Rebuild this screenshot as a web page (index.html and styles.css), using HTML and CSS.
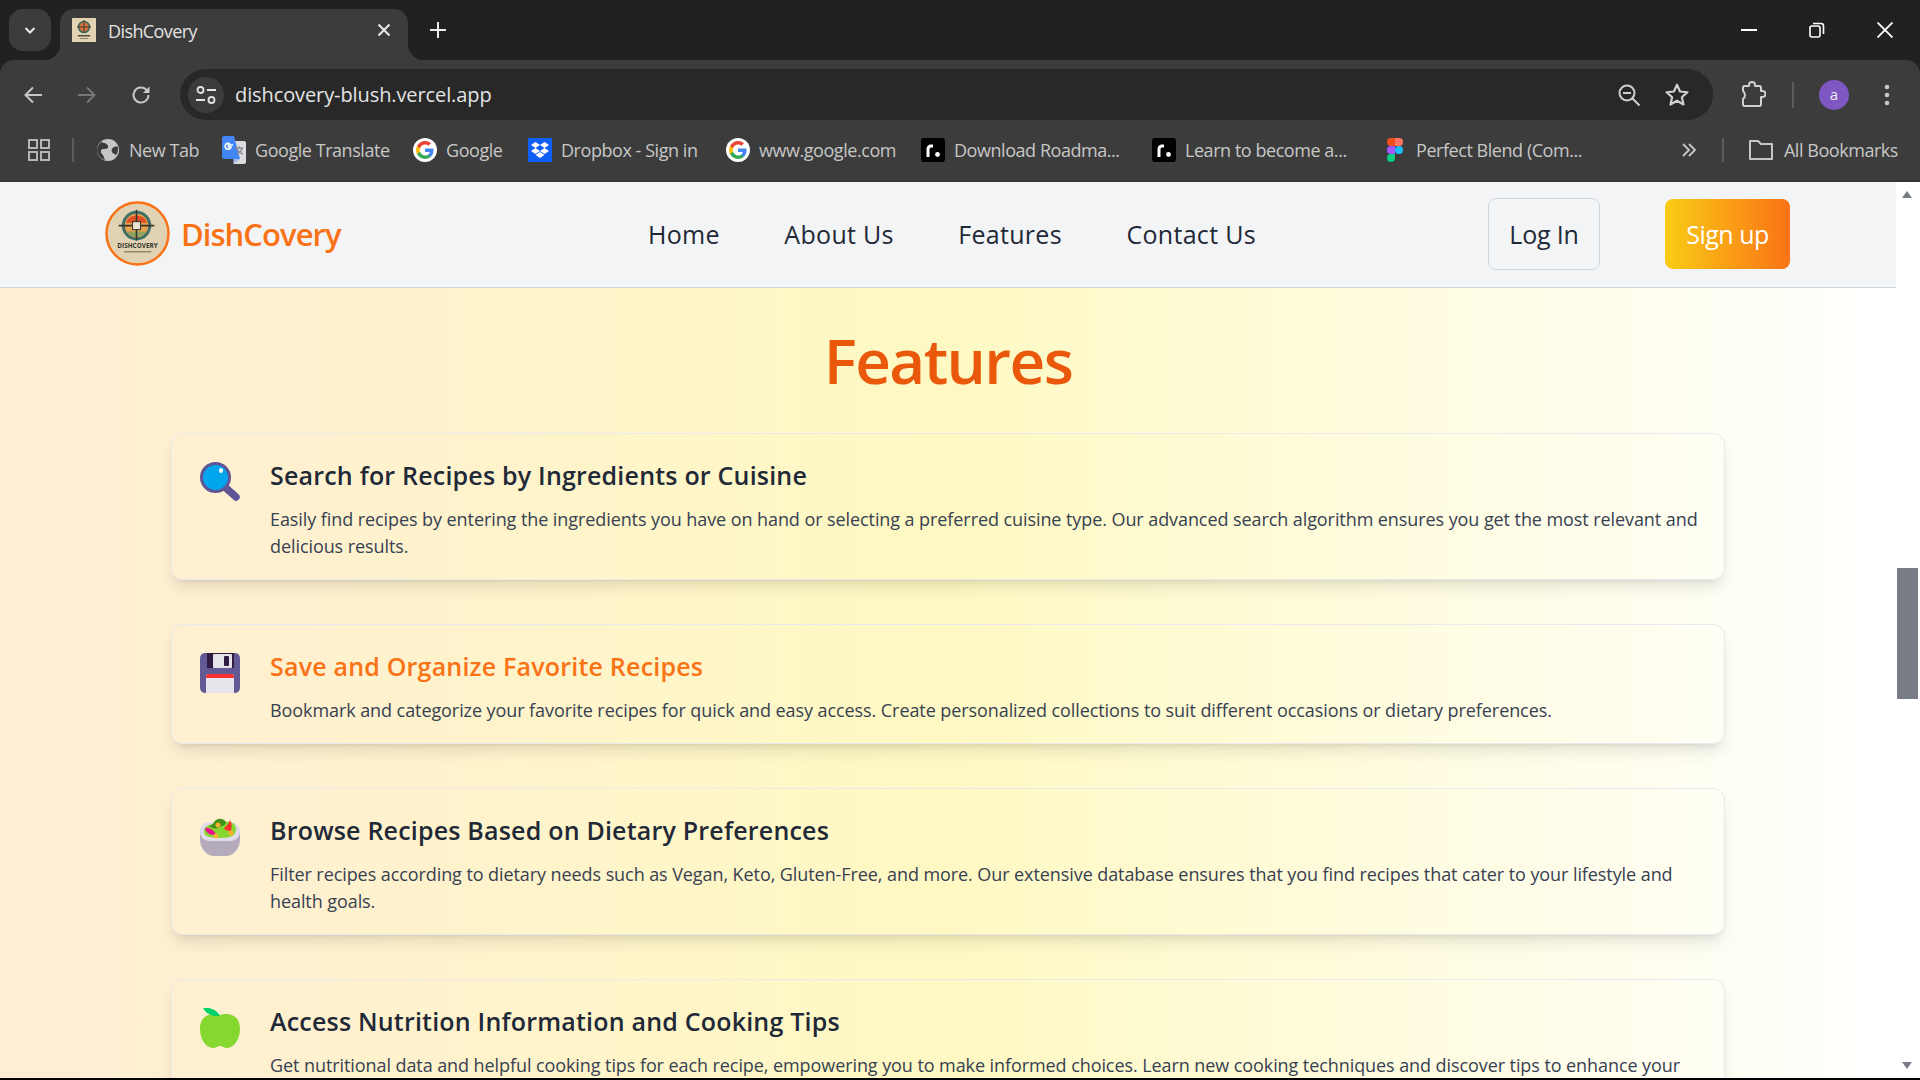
FILE: index.html
```html
<!DOCTYPE html>
<html lang="en">
<head>
    <meta charset="UTF-8">
    <title>DishCovery</title>
    <link rel="stylesheet" href="styles.css">
</head>
<body>
    <header class="browser">
        <div class="tabstrip">
            <button class="tab-search">
                <svg width="18" height="18" viewBox="0 0 18 18"><path d="M4.500 7 9 11.500 13.500 7" fill="none" stroke="#e8eaed" stroke-width="2"/></svg>
            </button>
            <div class="tab">
                <svg class="favicon" width="24" height="24" viewBox="0 0 24 24">
                    <rect width="24" height="24" fill="#e3d3b3"/>
                    <circle cx="12" cy="9" r="5.500" fill="#d9743a" stroke="#3c6b5f" stroke-width="1.600"/>
                    <path d="M12 2v13M5 9h14" stroke="#3a3a32" stroke-width="1"/>
                    <rect x="6" y="17" width="12" height="1.500" fill="#4b4a3d"/>
                    <rect x="8" y="20" width="8" height="1" fill="#8a8268"/>
                </svg>
                <span class="tab-title">DishCovery</span>
                <svg class="tab-close" width="14" height="14" viewBox="0 0 14 14"><path d="M1.500 1.500l11 11M12.500 1.500l-11 11" stroke="#e8eaed" stroke-width="2"/></svg>
            </div>
            <svg class="new-tab" width="16" height="16" viewBox="0 0 16 16"><path d="M8 0v16M0 8h16" stroke="#e8eaed" stroke-width="2"/></svg>
            <div class="window-btns">
                <svg width="16" height="16" viewBox="0 0 16 16"><path d="M0 8h16" stroke="#fff" stroke-width="2"/></svg>
                <svg width="16" height="16" viewBox="0 0 16 16"><rect x="1" y="4" width="10" height="11" rx="2" fill="none" stroke="#fff" stroke-width="1.600"/><path d="M4 1.500h8a2.500 2.500 0 0 1 2.500 2.500v8" fill="none" stroke="#fff" stroke-width="1.600"/></svg>
                <svg width="16" height="16" viewBox="0 0 16 16"><path d="M.5.5l15 15M15.500.5l-15 15" stroke="#fff" stroke-width="1.800"/></svg>
            </div>
        </div>

        <div class="toolbar">
            <svg class="tool back" width="24" height="24" viewBox="0 0 24 24"><path d="M21 12H5M12 4.500 4.500 12l7.500 7.500" fill="none" stroke="#c7c7c7" stroke-width="2"/></svg>
            <svg class="tool forward" width="24" height="24" viewBox="0 0 24 24"><path d="M3 12h16M12 4.500l7.500 7.500-7.500 7.500" fill="none" stroke="#777" stroke-width="2"/></svg>
            <svg class="tool reload" width="24" height="24" viewBox="0 0 24 24"><path d="M19.500 12a7.500 7.500 0 1 1-2.400-5.500L19.500 9" fill="none" stroke="#c7c7c7" stroke-width="2"/><path d="M20.500 3.500V10H14z" fill="#c7c7c7"/></svg>
            <div class="omnibox">
                <span class="site-chip">
                    <svg width="22" height="22" viewBox="0 0 22 22"><circle cx="5.500" cy="6" r="3" fill="none" stroke="#e3e3e3" stroke-width="1.800"/><path d="M12 6h9M1 16h9" stroke="#e3e3e3" stroke-width="1.800"/><circle cx="16.500" cy="16" r="3" fill="none" stroke="#e3e3e3" stroke-width="1.800"/></svg>
                </span>
                <span class="url">dishcovery-blush.vercel.app</span>
                <svg class="omni-zoom" width="24" height="24" viewBox="0 0 24 24"><circle cx="10" cy="10" r="7.500" fill="none" stroke="#d0d0d0" stroke-width="2"/><path d="M6 10h8M15.500 15.500l7 7" stroke="#d0d0d0" stroke-width="2"/></svg>
                <svg class="omni-star" width="26" height="26" viewBox="0 0 24 24"><path d="M12 2.500l2.800 6.300 6.800.7-5.100 4.600 1.500 6.700L12 17.300l-6 3.500 1.500-6.700-5.100-4.600 6.800-.7z" fill="none" stroke="#d0d0d0" stroke-width="2" stroke-linejoin="round"/></svg>
            </div>
            <svg class="tool ext" width="26" height="26" viewBox="0 0 26 26"><path d="M3 6.500a1.500 1.500 0 0 1 1.500-1.500H9V4a3 3 0 0 1 6 0v1h4.500A1.500 1.500 0 0 1 21 6.500V10h1.500a3 3 0 0 1 0 6H21v7.500a1.500 1.500 0 0 1-1.500 1.500h-15A1.500 1.500 0 0 1 3 23.500V18a5 5 0 0 0 0-8z" fill="none" stroke="#d0d0d0" stroke-width="2" stroke-linejoin="round"/></svg>
            <span class="tool-sep"></span>
            <span class="avatar">a</span>
            <svg class="tool dots" width="6" height="24" viewBox="0 0 6 24"><circle cx="3" cy="4" r="2.300" fill="#c7c7c7"/><circle cx="3" cy="12" r="2.300" fill="#c7c7c7"/><circle cx="3" cy="20" r="2.300" fill="#c7c7c7"/></svg>
        </div>

        <nav class="bookmarks">
            <svg class="apps" width="22" height="22" viewBox="0 0 22 22"><g fill="none" stroke="#b5b5b5" stroke-width="2"><rect x="1" y="1" width="8" height="8"/><rect x="13" y="1" width="8" height="8"/><rect x="1" y="13" width="8" height="8"/><rect x="13" y="13" width="8" height="8"/></g></svg>
            <span class="bm-sep"></span>
            <a class="bm bm-newtab">
                <svg width="24" height="24" viewBox="0 0 24 24"><circle cx="12" cy="12" r="11" fill="#c4c7c5"/><path d="M5 4c3 1 6 1 7 4s-3 3-5 3-3 3-1 5 2 4 3 6C5 21 1 17 1 12c0-3 2-6 4-8zM22 9c-3-1-5 0-6 2s0 4 2 5l2 1c2-2 2-5 2-8z" fill="#3c3c3c"/></svg>
                New Tab
            </a>
            <a class="bm bm-translate">
                <svg width="24" height="28" viewBox="0 0 24 28"><path d="M10 5h12a2 2 0 0 1 2 2v19a2 2 0 0 1-2 2H12z" fill="#dadce0"/><path d="M2 0h10l6 23H2a2 2 0 0 1-2-2V2a2 2 0 0 1 2-2z" fill="#4285f4"/><path d="M12 23l-1 5 7-5z" fill="#9fb9ee"/><path d="M13 12h8M17 12v-1.500M15 18c3-1 5-4 5-6M15 13c1 2 3 4 6 5" fill="none" stroke="#8a8d91" stroke-width="1.400"/><path d="M11 9H6.500v2H9a3 3 0 1 1-1-3" fill="none" stroke="#fff" stroke-width="1.600"/></svg>
                Google Translate
            </a>
            <a class="bm bm-google">
                <svg class="g" width="24" height="24" viewBox="0 0 48 48"><use href="#g-logo"/></svg>
                Google
            </a>
            <a class="bm bm-dropbox">
                <svg width="24" height="24" viewBox="0 0 24 24"><rect width="24" height="24" fill="#0f5ff5"/><path d="M7.500 4 12 7l-4.500 3L3 7zM16.500 4 21 7l-4.500 3L12 7zM7.500 10 12 13l-4.500 3L3 13zM16.500 10 21 13l-4.500 3L12 13zM7.500 17 12 14l4.500 3-4.500 3z" fill="#fff"/></svg>
                Dropbox - Sign in
            </a>
            <a class="bm bm-www">
                <svg class="g" width="24" height="24" viewBox="0 0 48 48"><use href="#g-logo"/></svg>
                www.google.com
            </a>
            <a class="bm bm-road">
                <svg width="24" height="24" viewBox="0 0 24 24"><rect width="24" height="24" rx="3" fill="#000"/><path d="M7 19v-8a3 3 0 0 1 3-3h2" fill="none" stroke="#fff" stroke-width="3"/><circle cx="16.500" cy="16.500" r="2.400" fill="#fff"/></svg>
                Download Roadma...
            </a>
            <a class="bm bm-learn">
                <svg width="24" height="24" viewBox="0 0 24 24"><rect width="24" height="24" rx="3" fill="#000"/><path d="M7 19v-8a3 3 0 0 1 3-3h2" fill="none" stroke="#fff" stroke-width="3"/><circle cx="16.500" cy="16.500" r="2.400" fill="#fff"/></svg>
                Learn to become a...
            </a>
            <a class="bm bm-figma">
                <svg width="16" height="24" viewBox="0 0 16 24"><path d="M8 0H4a4 4 0 0 0 0 8h4z" fill="#f24e1e"/><path d="M8 0h4a4 4 0 0 1 0 8H8z" fill="#ff7262"/><path d="M8 8H4a4 4 0 0 0 0 8h4z" fill="#a259ff"/><circle cx="12" cy="12" r="4" fill="#1abcfe"/><path d="M8 16H4a4 4 0 1 0 4 4z" fill="#0acf83"/></svg>
                Perfect Blend (Com...
            </a>
            <svg class="more" width="16" height="16" viewBox="0 0 16 16"><path d="M2 2l6 6-6 6M8 2l6 6-6 6" fill="none" stroke="#c7c7c7" stroke-width="1.800"/></svg>
            <span class="bm-sep bm-sep2"></span>
            <a class="bm bm-all">
                <svg width="24" height="22" viewBox="0 0 24 22"><path d="M1 20V2h8l3 3h11v15z" fill="none" stroke="#c7c7c7" stroke-width="2" stroke-linejoin="round"/></svg>
                All Bookmarks
            </a>
        </nav>
    </header>

    <!-- shared google G -->
    <svg class="defs" width="0" height="0">
        <defs>
            <g id="g-logo">
                <circle cx="24" cy="24" r="24" fill="#fff"/>
                <path d="M41 24.500c0-1.300-.1-2.500-.3-3.500H24v7h9.600c-.4 2.200-1.700 4.100-3.500 5.300v4.400h5.700c3.300-3.100 5.200-7.600 5.200-13.200z" fill="#4285f4"/>
                <path d="M24 42c4.700 0 8.700-1.600 11.800-4.300l-5.700-4.400c-1.600 1.100-3.600 1.700-6.100 1.700-4.600 0-8.500-3.100-9.900-7.300H8.200v4.500C11.100 37.900 17.100 42 24 42z" fill="#34a853"/>
                <path d="M14.100 27.700c-.4-1.100-.6-2.400-.6-3.700s.2-2.600.6-3.700v-4.500H8.200A18 18 0 0 0 6 24c0 2.900.7 5.700 2.200 8.200z" fill="#fbbc05"/>
                <path d="M24 13c2.600 0 5 .9 6.800 2.700l5.100-5.100C32.700 7.700 28.700 6 24 6 17.100 6 11.100 10.100 8.200 15.800l5.900 4.500c1.400-4.200 5.300-7.300 9.900-7.300z" fill="#ea4335"/>
            </g>
        </defs>
    </svg>

    <div class="viewport">
        <div class="page">
            <div class="navbar">
                <a class="brand">
                    <svg class="logo" width="65" height="65" viewBox="0 0 66 66">
                        <circle cx="33" cy="33" r="31.500" fill="#e1d2b4" stroke="#f97316" stroke-width="2.500"/>
                        <circle cx="32" cy="25" r="15" fill="#3f6f66"/>
                        <circle cx="32" cy="25" r="12" fill="#e9a04c"/>
                        <path d="M21 22a12 12 0 0 1 22 0z" fill="#df4f27"/>
                        <path d="M22 31a12 12 0 0 0 20 0z" fill="#8fa25f"/>
                        <path d="M32 9v31M14 25h36" stroke="#33352e" stroke-width="1.600"/>
                        <rect x="28" y="21" width="8" height="8" fill="#ece5cf" stroke="#33352e" stroke-width="1"/>
                        <text class="logo-text" x="33" y="48" text-anchor="middle">DISHCOVERY</text>
                        <rect x="19" y="51" width="28" height="1.200" fill="#7d745c"/>
                    </svg>
                    <span class="brand-name">DishCovery</span>
                </a>
                <div class="nav-links">
                    <a>Home</a>
                    <a>About Us</a>
                    <a>Features</a>
                    <a>Contact Us</a>
                </div>
                <div class="nav-actions">
                    <button class="btn-login">Log In</button>
                    <button class="btn-signup">Sign up</button>
                </div>
            </div>

            <main class="features">
                <h1>Features</h1>

                <section class="card">
                    <svg class="card-icon" width="40" height="40" viewBox="0 0 40 40">
                        <path d="M26 26l10 9" stroke="#5f5596" stroke-width="7.500" stroke-linecap="round"/>
                        <circle cx="15.500" cy="15.500" r="14" fill="#00a6ed" stroke="#5f5596" stroke-width="3"/>
                        <ellipse cx="21" cy="8.500" rx="2" ry="2.500" fill="#fff"/>
                    </svg>
                    <div class="card-body">
                        <h2>Search for Recipes by Ingredients or Cuisine</h2>
                        <p>Easily find recipes by entering the ingredients you have on hand or selecting a preferred cuisine type. Our advanced search algorithm ensures you get the most relevant and delicious results.</p>
                    </div>
                </section>

                <section class="card hovered">
                    <svg class="card-icon" width="40" height="40" viewBox="0 0 40 40">
                        <rect width="40" height="40" rx="5" fill="#635994"/>
                        <path d="M7 0h27v15H7z" fill="#321b41"/>
                        <rect x="13" y="1" width="19" height="14" rx="1" fill="#e6e4ea"/>
                        <rect x="24" y="3" width="5" height="10" rx="1" fill="#321b41"/>
                        <path d="M6 24a3 3 0 0 1 3-3h22a3 3 0 0 1 3 3v16H6z" fill="#e6e4ea"/>
                        <path d="M6 25v-1a3 3 0 0 1 3-3h22a3 3 0 0 1 3 3v1z" fill="#f8312f"/>
                    </svg>
                    <div class="card-body">
                        <h2>Save and Organize Favorite Recipes</h2>
                        <p>Bookmark and categorize your favorite recipes for quick and easy access. Create personalized collections to suit different occasions or dietary preferences.</p>
                    </div>
                </section>

                <section class="card">
                    <svg class="card-icon" width="40" height="40" viewBox="0 0 40 40">
                        <path d="M0 13h40v9c0 10-7 17-14 17H14C7 39 0 32 0 22z" fill="#b4acbc"/>
                        <rect y="5" width="40" height="19" rx="9" fill="#e1dcea"/>
                        <path d="M4 14c0-5 6-6 9-7 2-5 8-6 11-2 4-1 12 0 12 7 0 6-4 9-16 9S4 19 4 14z" fill="#86d72f"/>
                        <path d="M9 9c3-1 4-2 6-5 3-3 8-3 11 1 0 4-5 4-8 6-4 1-6 0-9-2z" fill="#44911b"/>
                        <path d="M5 11c3-1 8 1 11 6-4 2-10 0-11-6z" fill="#f70a8d"/>
                        <path d="M30 3c2 3 2 7 1 11-3 0-7-1-7-3 3-2 5-5 6-8z" fill="#f8312f"/>
                        <circle cx="18" cy="8" r="2.500" fill="#ffb02e"/>
                        <circle cx="16" cy="19" r="2.500" fill="#ffb02e"/>
                        <circle cx="31" cy="16" r="2.500" fill="#ffb02e"/>
                    </svg>
                    <div class="card-body">
                        <h2>Browse Recipes Based on Dietary Preferences</h2>
                        <p>Filter recipes according to dietary needs such as Vegan, Keto, Gluten-Free, and more. Our extensive database ensures that you find recipes that cater to your lifestyle and health goals.</p>
                    </div>
                </section>

                <section class="card">
                    <svg class="card-icon" width="40" height="40" viewBox="0 0 40 40">
                        <path d="M20 7c5-2 20-3 20 14 0 10-6 19-13 19-3 0-5-2-7-2s-4 2-7 2C6 40 0 31 0 21 0 4 15 5 20 7z" fill="#86d72f"/>
                        <path d="M3 0c7-1 14 2 17 8-7 1-14-2-17-8z" fill="#00d26a"/>
                    </svg>
                    <div class="card-body">
                        <h2>Access Nutrition Information and Cooking Tips</h2>
                        <p>Get nutritional data and helpful cooking tips for each recipe, empowering you to make informed choices. Learn new cooking techniques and discover tips to enhance your</p>
                    </div>
                </section>
            </main>
        </div>

        <div class="scrollbar">
            <span class="arrow-up"></span>
            <span class="thumb"></span>
            <span class="arrow-down"></span>
        </div>
    </div>
    <div class="screen-edge"></div>
</body>
</html>
```

FILE: styles.css
```css
* {
    box-sizing: border-box;
}
html, body {
    height: 100%;
}
body {
    margin: 0;
    height: 1080px;
    overflow: hidden;
    display: flex;
    flex-direction: column;
    font-family: "Open Sans", "Noto Sans", sans-serif;
    background: #000;
}
.defs {
    position: absolute;
}

/* browser chrome */
.browser {
    flex: none;
    background: #202221;
    color: #e3e3e3;
}
.tabstrip {
    height: 60px;
    padding: 9px 0 0 9px;
    display: flex;
    align-items: flex-start;
}
.tab-search {
    width: 42px;
    height: 42px;
    border: none;
    border-radius: 14px;
    background: #3c3c3c;
    display: flex;
    align-items: center;
    justify-content: center;
    padding: 0;
}
.tab {
    position: relative;
    width: 348px;
    height: 51px;
    margin-left: 9px;
    padding: 9px 17px 0 12px;
    background: #3c3c3c;
    border-radius: 14px 14px 0 0;
    display: flex;
    align-items: flex-start;
}
.tab::before, .tab::after {
    content: "";
    position: absolute;
    bottom: 0;
    width: 16px;
    height: 16px;
}
.tab::before {
    left: -16px;
    background: radial-gradient(circle at 0 0, transparent 16px, #3c3c3c 16.5px);
}
.tab::after {
    right: -16px;
    background: radial-gradient(circle at 100% 0, transparent 16px, #3c3c3c 16.5px);
}
.tab-title {
    margin: 1px 0 0 12px;
    font-size: 18px;
    line-height: 24px;
    letter-spacing: -.6px;
    flex: 1;
}
.tab-close {
    margin-top: 5px;
}
.new-tab {
    margin: 13px 0 0 22px;
}
.window-btns {
    margin-left: auto;
    margin-right: 27px;
    margin-top: 13px;
    display: flex;
    gap: 52px;
}
.toolbar {
    height: 60px;
    background: #3c3c3c;
    border-radius: 14px 14px 0 0;
    display: flex;
    align-items: flex-start;
    padding-top: 9px;
    position: relative;
}
.tool {
    flex: none;
}
.back {
    margin: 14px 0 0 21px;
}
.forward {
    margin: 14px 0 0 30px;
}
.reload {
    margin: 14px 0 0 30px;
}
.omnibox {
    width: 1533px;
    height: 51px;
    margin-left: 27px;
    background: #282828;
    border-radius: 26px;
    display: flex;
    align-items: center;
    padding-left: 8px;
}
.site-chip {
    width: 36px;
    height: 36px;
    border-radius: 50%;
    background: #3c3c3c;
    display: flex;
    align-items: center;
    justify-content: center;
}
.url {
    margin-left: 11px;
    font-size: 20px;
    letter-spacing: -.1px;
    color: #e3e3e3;
}
.omni-zoom {
    margin-left: auto;
}
.omni-star {
    margin: 0 23px 0 23px;
}
.ext {
    margin: 12px 0 0 27px;
}
.tool-sep {
    width: 2px;
    height: 26px;
    margin: 13px 0 0 26px;
    background: #5c5c5c;
}
.avatar {
    width: 30px;
    height: 30px;
    margin: 11px 0 0 25px;
    border-radius: 50%;
    background: #7e57c2;
    color: #eee;
    font-size: 15px;
    line-height: 29px;
    text-align: center;
}
.dots {
    margin: 14px 0 0 35px;
}
.bookmarks {
    height: 62px;
    background: #3c3c3c;
    border-bottom: 2px solid #35363a;
    display: flex;
    align-items: center;
    padding: 0 0 0 28px;
    font-size: 18px;
    color: #c7c7c7;
}
.apps {
    flex: none;
}
.bm-sep {
    width: 2px;
    height: 24px;
    margin-left: 22px;
    background: #5c5c5c;
    flex: none;
}
.bm {
    flex: none;
    display: flex;
    align-items: center;
    gap: 9px;
    white-space: nowrap;
    letter-spacing: -.45px;
    margin-left: 25px;
}
.bm svg {
    flex: none;
}
.bm-newtab {
    width: 101px;
    margin-left: 22px;
}
.bm-translate {
    width: 166px;
}
.bm-google {
    width: 90px;
}
.bm-dropbox {
    width: 173px;
}
.bm-www {
    width: 170px;
}
.bm-road, .bm-learn {
    width: 206px;
}
.bm-figma svg {
    margin: 0 4px;
}
.more {
    margin-left: auto;
}
.bm-sep2 {
    margin-left: 25px;
}
.bm-all {
    margin: 0 22px 0 25px;
}
.bm-all svg {
    margin-right: 2px;
}

/* page */
.viewport {
    flex: 1;
    min-height: 0;
    display: flex;
}
.page {
    flex: 1;
    min-width: 0;
    overflow: hidden;
    background: linear-gradient(to right, #ffedd5, #fef9c3 50%, #ffffff);
}
.navbar {
    height: 106px;
    background: #f3f4f6;
    border-bottom: 1px solid #d1d5db;
    display: flex;
    align-items: center;
    padding: 0 106px 2px 105px;
}
.brand {
    display: flex;
    align-items: center;
    gap: 11px;
    width: 543px;
}
.logo {
    flex: none;
}
.logo-text {
    font-size: 6.5px;
    font-weight: 700;
    fill: #33352e;
}
.brand-name {
    color: #f97316;
    font-size: 31px;
    font-weight: 600;
    letter-spacing: -.95px;
}
.nav-links {
    display: flex;
    gap: 64.5px;
    font-size: 25px;
    letter-spacing: .3px;
    color: #1f2937;
}
.nav-actions {
    margin-left: auto;
    display: flex;
    align-items: center;
    gap: 65px;
}
.nav-actions button {
    font-family: inherit;
    font-size: 25px;
    padding: 0;
}
.btn-login {
    width: 112px;
    height: 72px;
    background: transparent;
    border: 1px solid #d1d5db;
    border-radius: 8px;
    color: #1f2937;
    letter-spacing: -.2px;
}
.btn-signup {
    width: 125px;
    height: 70px;
    border: none;
    border-radius: 8px;
    color: #fff;
    background: linear-gradient(to right, #facc15, #f97316);
    letter-spacing: -.5px;
}
.features {
    padding: 32px 171px 0 171px;
}
h1 {
    margin: 0 0 33px;
    text-align: center;
    font-size: 62px;
    line-height: 80px;
    font-weight: 600;
    letter-spacing: -1.6px;
    color: #ea580c;
}
.card {
    display: flex;
    gap: 30px;
    padding: 23px 15px 19px 28px;
    margin-bottom: 44px;
    border: 1px solid #e9e9ef;
    border-radius: 12px;
    box-shadow: 0 10px 15px -3px rgba(0,0,0,.1), 0 4px 6px -4px rgba(0,0,0,.1);
}
.card-icon {
    flex: none;
    margin-top: 5px;
}
.card-body {
    min-width: 0;
}
h2 {
    margin: 0;
    font-size: 25px;
    line-height: 36px;
    font-weight: 600;
    letter-spacing: .2px;
    color: #1f2937;
}
.hovered h2 {
    color: #f97316;
}
p {
    margin: 13px 0 0;
    font-size: 18px;
    line-height: 27px;
    letter-spacing: -.08px;
    color: #374151;
}

/* scrollbar */
.scrollbar {
    position: relative;
    flex: none;
    width: 24px;
    background: #fff;
}
.thumb {
    position: absolute;
    top: 386px;
    left: 1px;
    width: 21px;
    height: 131px;
    background: #787c85;
}
.arrow-up, .arrow-down {
    position: absolute;
    left: 6px;
    width: 0;
    height: 0;
    border-left: 5.5px solid transparent;
    border-right: 5.5px solid transparent;
}
.arrow-up {
    top: 9px;
    border-bottom: 7px solid #787c85;
}
.arrow-down {
    bottom: 9px;
    border-top: 7px solid #787c85;
}
.screen-edge {
    flex: none;
    height: 2px;
    background: #000;
}
```
